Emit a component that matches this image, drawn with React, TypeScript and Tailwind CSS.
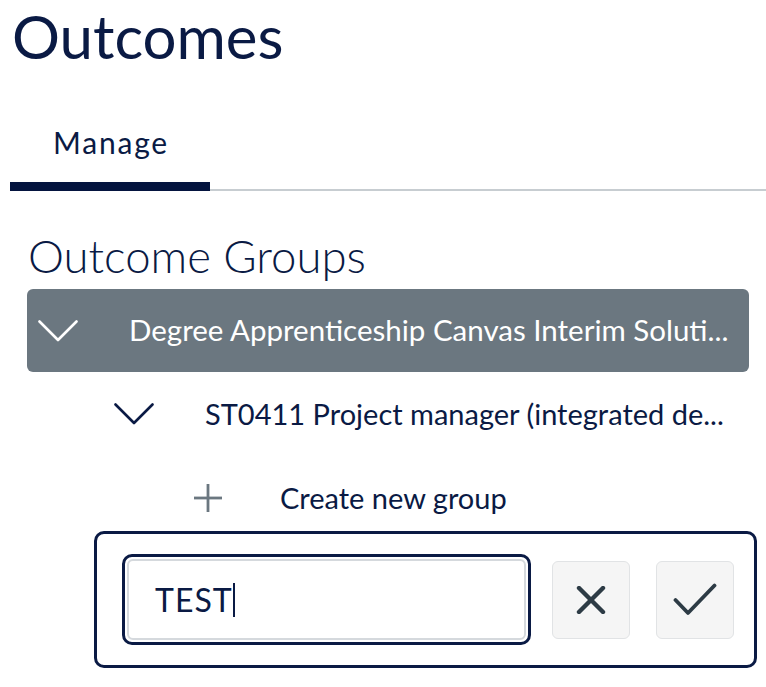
import React from 'react';

const NAVY = '#0a1a44';

const Chevron: React.FC<{ color: string }> = ({ color }) => (
  <svg width="40" height="22" viewBox="0 0 40 22" fill="none">
    <polyline points="1.5,1.5 20,20 38.5,1.5" stroke={color} strokeWidth="2.6" strokeLinecap="round" strokeLinejoin="round" />
  </svg>
);

const App: React.FC = () => {
  return (
    <div className="w-[766px] h-[687px] bg-white overflow-hidden text-[#0a1a44]" style={{ fontFamily: 'Lato, "Noto Sans", sans-serif' }}>
      <h1 className="pl-[12px] text-[60px] leading-[72px] font-normal whitespace-nowrap">Outcomes</h1>

      {/* tabs */}
      <div className="mt-[52px] ml-[10px] flex border-b-2 border-[#c7cdd1]">
        <div className="w-[200px] text-center text-[30px] leading-[36px] tracking-[1.8px] pl-[2px] pb-[22px] border-b-[9px] border-[#04143f] -mb-[2px]">
          Manage
        </div>
      </div>

      <h2 className="mt-[38px] pl-[28px] text-[45.5px] leading-[54px] font-light whitespace-nowrap">Outcome Groups</h2>

      {/* root group */}
      <div className="mt-[6px] ml-[27px] mr-[17px] h-[83px] rounded-[6px] bg-[#6b7780] flex items-center pl-[11px] pr-[16px] text-white">
        <div className="shrink-0"><Chevron color="#ffffff" /></div>
        <span className="ml-[51px] text-[29.5px] whitespace-nowrap">Degree Apprenticeship Canvas Interim Soluti...</span>
      </div>

      {/* sub group */}
      <div className="h-[83px] flex items-center pl-[114px]">
        <div className="shrink-0"><Chevron color={NAVY} /></div>
        <span className="ml-[51px] text-[29px] whitespace-nowrap">ST0411 Project manager (integrated de...</span>
      </div>

      {/* create new group */}
      <div className="h-[76px] pt-[10px] flex items-center pl-[193px]">
        <svg width="30" height="30" viewBox="0 0 30 30" fill="none">
          <line x1="15" y1="1" x2="15" y2="29" stroke="#6b7780" strokeWidth="2.8" />
          <line x1="1" y1="15" x2="29" y2="15" stroke="#6b7780" strokeWidth="2.8" />
        </svg>
        <span className="ml-[57px] text-[29px]">Create new group</span>
      </div>

      {/* new group form */}
      <div className="ml-[94px] w-[663px] h-[137px] border-[3px] border-[#0a1a44] rounded-[10px] flex items-center pl-[25px]">
        <div className="w-[409px] h-[91px] border-[3px] border-[#0a1a44] rounded-[10px] p-[2px]">
          <div className="h-full border-2 border-[#d5d9dd] rounded-[6px] flex items-center pl-[26px]">
            <span className="text-[32px] leading-none tracking-[1px]">TEST</span>
            <span className="w-[2px] h-[34px] bg-[#0a1a44]" />
          </div>
        </div>
        <button className="ml-[21px] w-[78px] h-[78px] rounded-[6px] bg-[#f5f5f5] border border-[#e1e3e5] flex items-center justify-center">
          <svg width="30" height="28" viewBox="0 0 30 28" fill="none">
            <line x1="3" y1="2" x2="27" y2="26" stroke="#2d3b45" strokeWidth="4.4" strokeLinecap="round" />
            <line x1="27" y1="2" x2="3" y2="26" stroke="#2d3b45" strokeWidth="4.4" strokeLinecap="round" />
          </svg>
        </button>
        <button className="ml-[26px] w-[78px] h-[78px] rounded-[6px] bg-[#f5f5f5] border border-[#e1e3e5] flex items-center justify-center">
          <svg width="44" height="33" viewBox="0 0 44 33" fill="none">
            <polyline points="2.5,17 15,30 41.5,2.5" stroke="#2d3b45" strokeWidth="3.8" strokeLinecap="round" strokeLinejoin="round" />
          </svg>
        </button>
      </div>
    </div>
  );
};

export default App;
